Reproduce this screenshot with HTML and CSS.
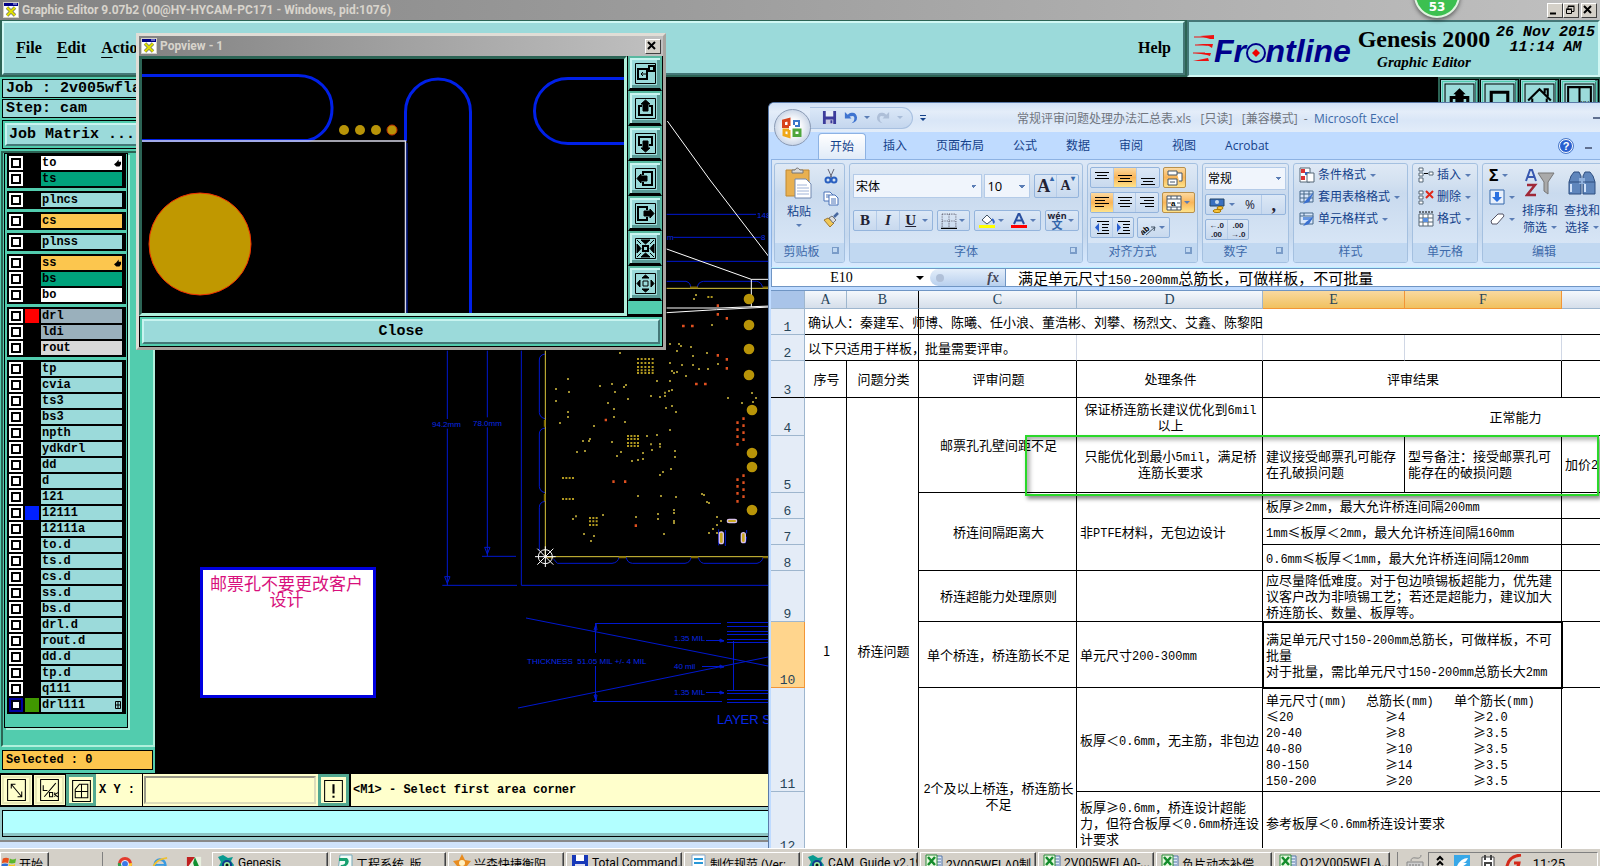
FILE: index.html
```html
<!DOCTYPE html>
<html lang="zh-CN">
<head>
<meta charset="utf-8">
<title>Genesis 2000</title>
<link rel="stylesheet" href="styles.css">
</head>
<body>
<svg class="defs" aria-hidden="true">
  <symbol id="xwin" viewBox="0 0 16 16"><path d="M0 0h16v16H0z" fill="#d4d0c8"/><path d="M1 1h14v14H1z" fill="#fff"/><path d="M1 1h14v3H1z" fill="#008"/><path d="M10 2h4" stroke="#ccf"/><path d="M4 5.500l8 8M12 5.500l-8 8" stroke="#776" stroke-width="3.500"/><path d="M4 5.500l8 8M12 5.500l-8 8" stroke="#e0e000" stroke-width="2"/></symbol>
  <symbol id="xls" viewBox="0 0 18 18"><path d="M8 2h9v14H8z" fill="#dfe8f6" stroke="#5577a8"/><path d="M12 5h4M12 8h4M12 11h4" stroke="#5577a8"/><path d="M1 1h11v12H1z" fill="#e8f8e0" stroke="#2c8b3a"/><path d="M3 3l7 8M10 3l-7 8" stroke="#148c2c" stroke-width="2.500"/></symbol>
  <symbol id="gen" viewBox="0 0 18 18"><path d="M1 3l5-2 5 3 5-1-2 4 3 4-3 6H6L2 12l2-4z" fill="#0a9a90"/><circle cx="10" cy="11" r="5" fill="#123a8c"/><circle cx="10" cy="11" r="3" fill="#9ff0a0"/><circle cx="10" cy="11" r="1.500" fill="#111"/></symbol>
</svg>
<div class="desktop">
<main class="workspace">
<section class="genesis">
  <header class="wtitle"><svg class="wi"><use href="#xwin"/></svg><span>Graphic Editor 9.07b2 (00@HY-HYCAM-PC171 - Windows, pid:1076)</span>
    <div class="wbtns"><button aria-label="Minimize"><svg viewBox="0 0 12 12"><path d="M2 9.500h6" stroke="#000" stroke-width="2"/></svg></button><button aria-label="Restore"><svg viewBox="0 0 12 12" fill="none" stroke="#000"><path d="M4 5V2.500h6v5H8M4 2h6.500M2.500 5.500h5v4h-5zM2 5h6"/></svg></button><button class="x" aria-label="Close window"><svg viewBox="0 0 12 12"><path d="M2 2l7 7M9 2l-7 7" stroke="#000" stroke-width="2"/></svg></button></div>
  </header>
  <div class="top">
    <nav class="menu"><button><u>F</u>ile</button><button><u>E</u>dit</button><button><u>A</u>ctions</button><button class="help">Help</button></nav>
    <div class="brand">
      <svg class="logo" viewBox="0 0 164 36"><g fill="#e11"><path d="M8 5l14-1v4h-4zM5 13h16l-1 4-3-2zM3 22h16l-1 3-3-1zM1 30h16l-1-3-5 1z"/><path d="M2 6h16M3 14h12M1 22h12" stroke="#e11"/></g><text x="22" y="31">Fr<tspan class="o">o</tspan>ntline</text><circle cx="64" cy="22" r="9" fill="#9bdada" stroke="#00008b" stroke-width="2"/><path d="M64 18l4 4-4 4-4-4z" fill="#f00000"/></svg>
      <div class="bname"><strong>Genesis 2000</strong><em>Graphic Editor</em></div>
      <div class="date">26 Nov 2015<br>11:14 AM</div>
    </div>
  </div>
  <div class="mid">
    <aside class="side">
      <div class="info">Job : 2v005wfla</div>
      <div class="info">Step: cam</div>
      <div class="mbox"><button class="mbtn">Job Matrix ...</button></div>
      <div class="well"><div class="list">
        <div class="grp"><label><input type="checkbox"><i></i><span class="w">to<svg class="hand" viewBox="0 0 9 9"><path d="M6 0v3h3v3L7 9H3L0 6l3-2z"/></svg></span></label><label><input type="checkbox"><i></i><span class="g">ts</span></label></div>
        <div class="grp"><label><input type="checkbox"><i></i><span>plncs</span></label></div>
        <div class="grp"><label><input type="checkbox"><i></i><span class="or">cs</span></label></div>
        <div class="grp"><label><input type="checkbox"><i></i><span>plnss</span></label></div>
        <div class="grp"><label><input type="checkbox"><i></i><span class="or">ss<svg class="hand" viewBox="0 0 9 9"><path d="M6 0v3h3v3L7 9H3L0 6l3-2z"/></svg></span></label><label><input type="checkbox"><i></i><span class="g">bs</span></label><label><input type="checkbox"><i></i><span class="w">bo</span></label></div>
        <div class="grp"><label><input type="checkbox"><i class="red"></i><span class="bl">drl</span></label><label><input type="checkbox"><i></i><span class="bl">ldi</span></label><label><input type="checkbox"><i></i><span class="gy">rout</span></label></div>
        <div class="grp"><label><input type="checkbox"><i></i><span>tp</span></label><label><input type="checkbox"><i></i><span>cvia</span></label><label><input type="checkbox"><i></i><span>ts3</span></label><label><input type="checkbox"><i></i><span>bs3</span></label><label><input type="checkbox"><i></i><span>npth</span></label><label><input type="checkbox"><i></i><span>ydkdrl</span></label><label><input type="checkbox"><i></i><span>dd</span></label><label><input type="checkbox"><i></i><span>d</span></label><label><input type="checkbox"><i></i><span>121</span></label><label><input type="checkbox"><i class="blue"></i><span>12111</span></label><label><input type="checkbox"><i></i><span>12111a</span></label><label><input type="checkbox"><i></i><span>to.d</span></label><label><input type="checkbox"><i></i><span>ts.d</span></label><label><input type="checkbox"><i></i><span>cs.d</span></label><label><input type="checkbox"><i></i><span>ss.d</span></label><label><input type="checkbox"><i></i><span>bs.d</span></label><label><input type="checkbox"><i></i><span>drl.d</span></label><label><input type="checkbox"><i></i><span>rout.d</span></label><label><input type="checkbox"><i></i><span>dd.d</span></label><label><input type="checkbox"><i></i><span>tp.d</span></label><label><input type="checkbox"><i></i><span>q111</span></label><label><input type="checkbox" class="on" checked><i class="green"></i><span>drl111<svg class="plus" viewBox="0 0 6 8"><path d="M.5.500h5v7h-5zM3 0v8M0 4h6" fill="none" stroke="#000"/></svg></span></label></div>
      </div></div>
      <div class="selected">Selected : 0</div>
    </aside>
    <div class="canvas">
      <svg class="board"><g transform="translate(-155 -77)">
        <svg class="pcb" x="400" y="180" width="380" height="420" viewBox="0 0 1140 1260" fill="none">
          <g stroke="#0018d0" stroke-width="3">
            <path d="M800 103h268M820 172h262M800 244h310M142 512v205M142 746v470M127 1216h224M262 512v200M262 742v387M246 1129h102M364 512v704h746"/>
            <path d="M134 1190h16l-8 20zM254 1102h16l-8 20z"/>
            <path d="M800 304h58q14 4 14 18M892 322q2-16 18-18h160q14 2 18 18M436 522q-18 2-18 18v158q2 16 18 18M436 744q-18 2-18 18v158q2 16 18 18M436 964q-18 2-18 18v130M460 1136l12 14h164q18-2 21-18M679 1132q2 16 18 18h158q16-2 18-18M895 1132q4 16 16 18h160q16-4 18-18"/>
            <path d="M956 1048v48M976 1050v48M1040 1050v10M1036 1090l4-20"/>
          </g>
          <g stroke="#dcc83c" stroke-width="3"><path d="M800 325h310M436 512v618h674"/></g>
          <path d="M434 720v20M434 942v22M656 1132h22M873 1132h22M870 322h24M1088 322h16M440 1132h20M1088 1132h20" stroke="#806800" stroke-width="5"/>
          <path d="M802-177L930 0l175 228M800 207l254 91h56M1054 298v82M800 384h160l150-6M800 398l150-9 160-8" stroke="#fff" stroke-width="3"/>
          <path d="M711 537h50M711 549h50M711 561h50M711 571h50M711 579h50" stroke="#b09820" stroke-width="6" stroke-dasharray="6 5"/>
          <path d="M681 768h36M681 777h36M681 789h36M681 798h36M567 1014h28M567 1024h28M567 1035h28M486 894h38M486 957h36M922 351h18" stroke="#b09820" stroke-width="6" stroke-dasharray="6 4"/>
          <path stroke="#a09030" stroke-width="6" d="M501 597h6M465 627h6M504 636h6M465 663h6M501 696h6M501 711h6M477 729h6M597 618h6M633 612h6M642 636h6M669 621h6M675 615h6M681 657h6M621 669h6M639 687h6M639 711h6M672 726h6M579 738h6M546 783h6M564 783h6M567 777h6M528 816h6M552 813h6M633 786h6M660 816h6M648 828h6M693 843h6M711 840h6M726 819h6M726 837h6M738 768h6M768 765h6M753 810h6M777 792h6M777 800h6M750 793h6M807 750h6M768 603h6M777 651h6M750 648h6M792 648h6M792 638h6M804 633h6M813 630h6M807 603h6M795 684h6M813 678h6M825 696h6M822 813h6M822 831h6M810 867h6M777 885h6M786 876h6M807 492h6M834 492h6M840 498h6M828 513h6M870 501h6M918 519h6M876 528h6M807 549h6M843 555h6M813 573h6M819 579h6M828 576h6M855 588h6M876 555h6M894 567h6M921 567h6M951 552h6M933 435h6M879 357h6M885 345h6M657 519h6M711 948h6M780 948h6M825 951h6M903 942h6M909 945h6M918 966h6M924 969h6M705 1011h6M771 1002h6M771 1017h6M819 990h6M819 999h6M819 1023h6M819 1029h6M516 1017h6M525 1009h6M606 1005h6M549 1062h6M579 1068h6M570 1083h6M789 1062h6M948 1011h6M960 1023h6M948 1035h6M936 1047h6M924 1059h6M948 1059h6M981 654h6M1023 669h6M1053 639h6M1065 654h6M1056 666h6"/>
          <path stroke="#e05020" stroke-width="8" d="M846 438h8M873 438h8M950 403h7M977 415h7M950 526h7M977 538h7M977 565h7M885 612h8M912 612h8M614 720h7M637 905h7M672 905h7M704 1037h7M1009 728h7M1009 749h7M1009 770h7M1009 793h7M1027 716h7M1027 737h7M1027 758h7M1027 779h7M1009 899h7M1009 919h7M1009 940h7M1009 964h7M1027 887h7M1027 908h7M1027 929h7M1027 950h7M950 377h7"/>
          <g fill="#b89408"><circle cx="1047" cy="357" r="16"/><circle cx="1047" cy="435" r="16"/><circle cx="1047" cy="507" r="16"/><circle cx="1047" cy="585" r="16"/><circle cx="1056" cy="690" r="16"/><circle cx="1056" cy="819" r="16"/><circle cx="1056" cy="861" r="16"/><circle cx="1056" cy="990" r="16"/></g>
          <g fill="#c8a820" stroke="#d8c0e8" stroke-width="4"><rect x="982" y="1018" width="28" height="10" rx="5"/><rect x="958" y="1056" width="12" height="35" rx="6"/><rect x="1024" y="1058" width="12" height="30" rx="6"/></g>
          <g stroke="#fff" stroke-width="3"><circle cx="436" cy="1130" r="21"/><path d="M405 1130h62M436 1099v62M412 1106l48 48M460 1106l-48 48"/></g>
        </svg>
        <g stroke="#0018d0" fill="none"><path d="M526 618l242 48M518 708l250-51M595 623.500h126M593 701.500h129M595.500 624v29M595.500 666v35M706 640.500h18M702 666.500h22M706 692.500h18M733.500 641v50M727 622.500h41M727 626.500h41M727 631.500h41M727 634.500h41M727 639.500h41M727 642.500h41M727 690.500h41M727 693.500h41M727 699.500h41M727 702.500h41"/><path d="M594 630h3l-1-6zM594 695h3l-1 6zM720 639v3l4-1zM720 665v3l4-1zM720 691v3l4-1z"/></g>
        <g class="dim"><text x="432" y="427">94.2mm</text><text x="473" y="426">78.0mm</text><text x="757" y="218">148</text><text x="761" y="240">8</text><text x="667" y="240">m</text><text x="674" y="641">1.35 MIL</text><text x="674" y="669">40 mil</text><text x="674" y="695">1.35 MIL</text><text x="527" y="664">THICKNESS  51.05 MIL +/- 4 MIL</text><text class="big" x="717" y="724">LAYER S</text></g>
      </g></svg>
      <div class="note">邮票孔不要更改客户设计</div>
      <div class="tools"><button aria-label="Pan up"><svg viewBox="0 0 30 30"><path d="M1 1h28v28H1z" fill="none" stroke="#000"/><path d="M7 28V14h16v14" fill="none" stroke="#000" stroke-width="3"/><path d="M11 20v-9H9l6-6 6 6h-2v9z"/></svg></button><button aria-label="Pan down"><svg viewBox="0 0 30 30"><path d="M1 1h28v28H1z" fill="none" stroke="#000"/><path d="M7 28V9h16v19" fill="none" stroke="#000" stroke-width="3"/><path d="M11 20h8v6h-8z"/></svg></button><button aria-label="Home"><svg viewBox="0 0 30 30" fill="none" stroke="#000" stroke-width="2"><path d="M1 1h28v28H1z" stroke-width="1"/><path d="M4 17L15 6l11 11M8 15v13M22 15v13M20 10V6h3v7M10 21h4v5h-4zM17 28v-8h4"/></svg></button><button aria-label="Coordinates"><svg viewBox="0 0 30 30"><path d="M1 1h28v28H1z" fill="none" stroke="#000"/><path d="M4 4h22v24H4zM15 4v24" fill="none" stroke="#000" stroke-width="2"/><text x="16" y="22">XY</text></svg></button></div>
    </div>
  </div>
  <div class="status">
    <button class="sb" aria-label="Snap corner"><svg viewBox="0 0 18 22" fill="none" stroke="#000"><path d="M.5.500h17v20H.5zM4 5l10 12M4 9V5h4M14 12v5h-4"/></svg></button><button class="sb" aria-label="Units"><svg viewBox="0 0 18 22" fill="none" stroke="#000"><path d="M.5.500h17v20H.5zM4 17L15 4M3 6v5h4M9 13h3v4H9zM14 13v4M17 13l-3 2 3 2"/></svg></button><button class="sb act" aria-label="Grid"><svg viewBox="0 0 18 22" fill="none" stroke="#000"><path d="M.5.500h17v20H.5zM3 17V9l4-5h8v13zM9 4v13M3 11h12"/></svg></button>
    <label class="xy" for="xy">X Y :</label><input id="xy" type="text"><button class="sb act ex" aria-label="Alert"><svg viewBox="0 0 18 22"><path d="M.5.500h17v20H.5z" fill="none" stroke="#000"/><path d="M9 4v9M9 15v2" stroke="#000" stroke-width="2"/></svg></button>
    <span class="msg">&lt;M1&gt; - Select first area corner</span>
  </div>
  <div class="foot"><div></div></div>
</section>
<div class="behind"></div>

<section class="pop">
  <header class="wtitle"><svg class="wi"><use href="#xwin"/></svg><span>Popview - 1</span><div class="wbtns"><button class="x" aria-label="Close popview"><svg viewBox="0 0 12 12"><path d="M2 2l7 7M9 2l-7 7" stroke="#000" stroke-width="2"/></svg></button></div></header>
  <div class="pbody">
    <div class="pview"><svg viewBox="142 59 482 256" preserveAspectRatio="xMinYMin slice"><g fill="none" stroke="#0020e8" stroke-width="3"><path d="M142 75.500h156a34 32 0 0 1 34 33q0 20-18 30l-6 2H142M624 78.500h-56a33 32 0 0 0 0 65h56M405.500 141v-29a32.500 33 0 0 1 65 0v204"/></g><path d="M142 141h263.500v175" fill="none" stroke="#d8d8e8" stroke-width="1.500"/><path d="M407 143v172" stroke="#0020c0"/><circle cx="200" cy="244" r="51" fill="#c09800" stroke="#f03000"/><g fill="#b89408"><circle cx="344" cy="130" r="5"/><circle cx="360" cy="130" r="5"/><circle cx="376" cy="130" r="5"/><circle cx="392" cy="130" r="5" stroke="#c03000"/></g></svg></div>
    <div class="ptools">
      <button aria-label="Zoom window"><svg viewBox="0 0 21 21"><path d="M.5.500h20v20H.5z"/><path d="M3 6h9v10H3zM14 3h5v5h-5z" stroke-width="2"/><path d="M12 11H6M8 9l-2 2 2 2M14 8l-3 3"/></svg></button>
      <button aria-label="Up"><svg viewBox="0 0 21 21"><path d="M.5.500h20v20H.5z"/><path d="M7 8H4v9h13V8h-3" stroke-width="2"/><path d="M8 13V6H6l4.500-4L15 6h-2v7z" fill="#000"/></svg></button>
      <button aria-label="Down"><svg viewBox="0 0 21 21"><path d="M.5.500h20v20H.5z"/><path d="M7 12H4V4h13v8h-3" stroke-width="2"/><path d="M8 8v7H6l4.500 4 4.500-4h-2V8z" fill="#000"/></svg></button>
      <button aria-label="Left"><svg viewBox="0 0 21 21"><path d="M.5.500h20v20H.5z"/><path d="M8 7V4h9v13H8v-3" stroke-width="2"/><path d="M12 8H6V6l-4 4.500L6 15v-2h6z" fill="#000"/></svg></button>
      <button aria-label="Right"><svg viewBox="0 0 21 21"><path d="M.5.500h20v20H.5z"/><path d="M12 7V4H3v13h9v-3" stroke-width="2"/><path d="M9 8h6V6l4 4.500-4 4.500v-2H9z" fill="#000"/></svg></button>
      <button aria-label="Zoom in"><svg viewBox="0 0 21 21"><path d="M.5.500h20v20H.5z"/><path d="M8 8h5v5H8z" stroke-width="2"/><path d="M6 2h9l-4.500 4zM6 19h9l-4.500-4zM2 6v9l4-4.500zM19 6v9l-4-4.500zM2 2l4 4M19 2l-4 4M2 19l4-4M19 19l-4-4" fill="#000"/></svg></button>
      <button aria-label="Zoom out"><svg viewBox="0 0 21 21"><path d="M.5.500h20v20H.5z"/><path d="M8 8h5v5H8z"/><path d="M7 5h7l-3.500-3zM7 16h7l-3.500 3zM5 7v7l-3-3.500zM16 7v7l3-3.500z" fill="#000"/></svg></button>
    </div>
  </div>
  <div class="pclose"><button>Close</button></div>
</section>

<section class="excel">
  <header class="xtitle">
    <button class="orb" aria-label="Office"><svg viewBox="0 0 24 24" fill="none" stroke-width="3"><path d="M9 10V3.500L3.500 5v5.500H9" stroke="#d8431c"/><path d="M14 9V5h5v5h-4" stroke="#3a76c8" stroke-width="2"/><path d="M9 14H4v5l5 1.500V14" stroke="#f0a818"/><path d="M14 14h6v5.500h-6z" stroke="#4fa63c"/></svg></button>
    <div class="qat"><button aria-label="Save"><svg viewBox="0 0 16 16"><path d="M1 1h14v14H1z" fill="#3c3c9c"/><path d="M4 1h8v6H4z" fill="#e8eef8"/><path d="M4 10h8v5H4z" fill="#c8c8e0"/><path d="M9 11h2v3H9z" fill="#3c3c9c"/></svg></button><button aria-label="Undo"><svg viewBox="0 0 16 16"><path d="M2 2v7h7L7 7q6-2 5 3 0 2-3 4 6-1 6-6-1-6-6-5-2 0-4 2z" fill="#3f74d0"/></svg></button><i class="dd"></i><button aria-label="Redo"><svg viewBox="0 0 16 16"><path d="M14 2v7H7l2-2q-6-2-5 3 0 2 3 4-6-1-6-6 1-6 6-5 2 0 4 2z" fill="#aebfd8"/></svg></button><i class="dd pale"></i></div>
    <button class="qmore" aria-label="Customize"><b></b><i class="dd"></i></button>
    <h1>常规评审问题处理办法汇总表.xls&nbsp;&nbsp; [只读]&nbsp;&nbsp; [兼容模式]&nbsp; -&nbsp; <span>Microsoft Excel</span></h1>
    <b class="minus"></b>
  </header>
  <nav class="tabs"><a href="#" class="cur">开始</a><a href="#">插入</a><a href="#">页面布局</a><a href="#">公式</a><a href="#">数据</a><a href="#">审阅</a><a href="#">视图</a><a href="#">Acrobat</a><button class="q" aria-label="Help">?</button><b class="minus"></b></nav>
  <div class="ribbon">
    <section class="rg clip"><div class="rb">
      <button class="big"><svg viewBox="0 0 28 32"><path d="M1 3h23v26H1z" fill="#e8b050" stroke="#c08830"/><path d="M7 6V3h3q2-4 5 0h3v3z" fill="#d8d8d8" stroke="#777"/><path d="M10 12h11l5 5v14H10z" fill="#fff" stroke="#7088b0"/><path d="M12 18h10M12 21h12M12 24h12M12 27h12" stroke="#a0b4d8"/></svg>粘贴<i class="dd"></i></button>
      <div class="col"><button aria-label="Cut"><svg viewBox="0 0 16 16" fill="none"><path d="M5 1l4 9M11 1L7 10" stroke="#667"/><circle cx="5" cy="12" r="2.500" stroke="#2a60c0" stroke-width="2"/><circle cx="11" cy="12" r="2.500" stroke="#2a60c0" stroke-width="2"/></svg></button><button aria-label="Copy"><svg viewBox="0 0 16 16" fill="#fff" stroke="#4a72b8"><path d="M1 2h6l3 3v6H1z"/><path d="M6 5h6l3 3v7H6z"/><path d="M8 9h5M8 11h5M8 13h5M3 5h3M3 7h3"/></svg></button><button aria-label="Format painter"><svg viewBox="0 0 16 16"><path d="M1 8l4-2 6 5-4 4z" fill="#f0c858" stroke="#a07830"/><path d="M6 6l3-2 4 4-3 3z" fill="#ddd" stroke="#777"/><path d="M11 5l4-4" stroke="#4868a0" stroke-width="2.500"/></svg></button></div>
    </div><footer>剪贴板<b class="lau"></b></footer></section>
    <section class="rg font"><div class="rb rows">
      <div class="row tall"><select aria-label="Font" class="fname"><option>宋体</option></select><select aria-label="Font size" class="fsize"><option>10</option></select><div class="seg ser"><button class="ab">A<sup>▴</sup></button><button class="am">A<sup>▾</sup></button></div></div>
      <div class="row"><div class="seg ser biu"><button>B</button><button class="it">I</button><button class="un">U</button><i class="dd"></i></div><div class="seg w34"><button aria-label="Borders"><svg viewBox="0 0 14 14"><path d="M1 1h12M1 7h12M1 1v12M7 1v12M13 1v12" stroke="#667" stroke-dasharray="1 1"/><path d="M0 13.500h14" stroke="#000"/></svg></button><i class="dd"></i></div><div class="seg w67"><button aria-label="Fill color"><svg viewBox="0 0 16 16"><path d="M3 7l5-5 5 5-5 4z" fill="#fff" stroke="#456"/><path d="M13 6q3 3 1 4" stroke="#36c" fill="none" stroke-width="2"/><path d="M0 12h16v3H0z" fill="#ff0"/></svg></button><i class="dd"></i><button aria-label="Font color"><svg viewBox="0 0 16 16"><path d="M3 11L7.500 1h1L13 11M5 7.500h6" fill="none" stroke="#2a50a0" stroke-width="2"/><path d="M0 12h16v3H0z" fill="#f00"/></svg></button><i class="dd"></i></div><div class="seg w34"><button class="wen"><span>wén</span><span class="zi">文</span></button><i class="dd"></i></div></div>
    </div><footer>字体<b class="lau"></b></footer></section>
    <section class="rg algn"><div class="rb rows3">
      <div class="row"><div class="seg s3"><button aria-label="Top"><svg viewBox="0 0 16 16"><path d="M1 2.500h14M3 5.500h10M1 8.500h14" stroke="#000"/></svg></button><button class="hot" aria-label="Middle"><svg viewBox="0 0 16 16"><path d="M1 5.500h14M3 8.500h10M1 11.500h14" stroke="#000"/></svg></button><button aria-label="Bottom"><svg viewBox="0 0 16 16"><path d="M1 8.500h14M3 11.500h10M1 14.500h14" stroke="#000"/></svg></button></div><div class="seg hot"><button aria-label="Wrap"><svg viewBox="0 0 16 16" fill="#fff" stroke="#456"><path d="M1 1h9v4H1zM1 9h9v6H1zM10 3h5v8h-3M3 12h5"/></svg></button></div></div>
      <div class="row"><div class="seg s3"><button class="hot" aria-label="Align left"><svg viewBox="0 0 16 16"><path d="M1 2.500h14M1 5.500h10M1 8.500h14M1 11.500h9" stroke="#000"/></svg></button><button aria-label="Center"><svg viewBox="0 0 16 16"><path d="M1 2.500h14M3 5.500h10M1 8.500h14M3 11.500h10" stroke="#000"/></svg></button><button aria-label="Align right"><svg viewBox="0 0 16 16"><path d="M1 2.500h14M5 5.500h10M1 8.500h14M6 11.500h9" stroke="#000"/></svg></button></div><div class="seg hot"><button aria-label="Merge"><svg viewBox="0 0 16 16" fill="#fff" stroke="#456"><path d="M1 1h14v14H1zM1 4h14M1 12h14M5 1v3M11 1v3M5 12v3M11 12v3M2 8h3M11 8h3"/><text x="5" y="11">a</text></svg></button><i class="dd"></i></div></div>
      <div class="row"><div class="seg"><button aria-label="Outdent"><svg viewBox="0 0 16 16"><path d="M3 1.500h12M8 4.500h7M8 7.500h6M8 10.500h7M3 13.500h12" stroke="#000"/><path d="M5 3v9L1 7.500z" fill="#2a60d0"/></svg></button><button aria-label="Indent"><svg viewBox="0 0 16 16"><path d="M3 1.500h12M8 4.500h7M8 7.500h6M8 10.500h7M3 13.500h12" stroke="#000"/><path d="M2 3v9l4-4.500z" fill="#2a60d0"/></svg></button></div><div class="seg"><button aria-label="Orientation"><svg viewBox="0 0 16 16"><text x="-2" y="11" transform="rotate(-40 6 8)">ab</text><path d="M5 15l9-8M14 7l-1 4M14 7l-4 0" stroke="#456"/></svg></button><i class="dd"></i></div></div>
    </div><footer>对齐方式<b class="lau"></b></footer></section>
    <section class="rg num"><div class="rb rows3"><select aria-label="Format" class="nf"><option>常规</option></select>
      <div class="row"><div class="seg full"><button aria-label="Currency"><svg viewBox="0 0 16 16"><path d="M1 2h14v7H1z" fill="#3a70c0" stroke="#246"/><circle cx="8" cy="5" r="2" fill="#cde"/><ellipse cx="11" cy="11" rx="3" ry="1.500" fill="#fc4" stroke="#a70"/><ellipse cx="8" cy="14" rx="4" ry="1.500" fill="#fc4" stroke="#a70"/></svg></button><i class="dd"></i><button>%</button><button class="comma">,</button></div></div>
      <div class="row"><div class="seg dec"><button>←.0<br>.00</button><button>.00<br>→.0</button></div></div>
    </div><footer>数字<b class="lau"></b></footer></section>
    <section class="rg sty"><div class="rb links">
      <button><svg viewBox="0 0 16 16"><path d="M1 1h10v14H1z" fill="#fff" stroke="#567"/><path d="M2 2h4v4H2zM2 9h4v4H2z" fill="#d33"/><path d="M6 5h4v3H6z" fill="#36c"/><path d="M8 6h7v9H8z" fill="#fff" stroke="#567"/></svg>条件格式<i class="dd"></i></button>
      <button><svg viewBox="0 0 16 16"><path d="M1 2h13v11H1zM1 5h13M1 9h13M5 2v11M10 2v11" fill="#d8e6fa" stroke="#468"/><path d="M4 15l3-4 8-8-5 10z" fill="#3a70d0"/></svg>套用表格格式<i class="dd"></i></button>
      <button><svg viewBox="0 0 16 16"><path d="M1 2h13v11H1zM1 5h13M5 2v3" fill="#d8e6fa" stroke="#468"/><path d="M4 6h9v3H4z" fill="#6a98e0"/><path d="M4 15l3-4 8-6-5 8z" fill="#3a70d0"/></svg>单元格样式<i class="dd"></i></button>
    </div><footer>样式</footer></section>
    <section class="rg cel"><div class="rb links">
      <button><svg viewBox="0 0 16 16" fill="#fff" stroke="#567"><path d="M1 1h4v3H1zM1 6h4v3H1zM1 11h4v4H1zM11 5h4v3h-4z"/><path d="M10 6.500H6" stroke="#000"/></svg>插入<i class="dd"></i></button>
      <button><svg viewBox="0 0 16 16" fill="#fff" stroke="#567"><path d="M1 2h4v3H1zM1 7h4v3H1zM1 12h4v3H1z"/><path d="M8 2l7 7M15 2l-7 7" stroke="#e02818" stroke-width="2"/></svg>删除<i class="dd"></i></button>
      <button><svg viewBox="0 0 16 16"><path d="M1 3h14v12H1zM1 7h14M1 11h14M5 3v12M10 3v12" fill="#fff" stroke="#567"/><path d="M5 7h5v4H5z" fill="#5a90e0"/><path d="M1 1h14" stroke="#000" stroke-dasharray="2 1"/></svg>格式<i class="dd"></i></button>
    </div><footer>单元格</footer></section>
    <section class="rg edt"><div class="rb">
      <div class="links sm"><button class="sig">Σ<i class="dd"></i></button><button aria-label="Fill"><svg viewBox="0 0 16 16"><path d="M1 1h14v14H1z" fill="#e8f0fc" stroke="#36a"/><path d="M6 3h4v5h3l-5 5-5-5h3z" fill="#2a70e0"/></svg><i class="dd"></i></button><button aria-label="Clear"><svg viewBox="0 0 16 16"><path d="M2 10l7-7h5l1 2-7 8H3z" fill="#fff" stroke="#556"/></svg><i class="dd"></i></button></div>
      <button class="big"><svg viewBox="0 0 30 30"><path d="M13 5h16l-6 9v12l-4-3v-9z" fill="#aaa" stroke="#777"/><path d="M1 13L5 2h2l4 11M3 9h6" stroke="#3858b0" stroke-width="2" fill="none"/><path d="M2 17h8L2 27h9" stroke="#a02838" stroke-width="2.500" fill="none"/></svg>排序和<span>筛选<i class="dd"></i></span></button>
      <button class="big"><svg viewBox="0 0 30 30"><path d="M4 8l3-4h5l2 4v18H2V14zM26 8l-3-4h-5l-2 4v18h12V14z" fill="#5f86bc" stroke="#2f4f80"/><path d="M12 10h6v6h-6z" fill="#8fb0dc"/><path d="M4 16v8M18 16v8" stroke="#d0e2fa" stroke-width="2"/><path d="M2 14h12M16 14h12" stroke="#2f4f80"/></svg>查找和<span>选择<i class="dd"></i></span></button>
    </div><footer>编辑</footer></section>
  </div>
  <div class="fbar"><label class="nb"><input aria-label="Name box" value="E10"><i class="dd blk"></i></label><div class="fx"><b></b><em>fx</em></div><div class="ft">满足单元尺寸<s>150-200mm</s>总筋长，可做样板，不可批量</div></div>
  <div class="sheet">
  <table>
    <colgroup><col class="c0"><col class="cA"><col class="cB"><col class="cC"><col class="cD"><col class="cE"><col class="cF"><col class="cG"></colgroup>
    <thead><tr><th class="cor"></th><th>A</th><th class="k">B</th><th>C</th><th>D</th><th class="s">E</th><th class="s">F</th><th></th></tr></thead>
    <tbody>
    <tr class="h26"><th>1</th><td colspan="2" class="l nw">确认人：秦建军、师博、陈曦、任小浪、董浩彬、刘攀、杨烈文、艾鑫、陈黎阳</td><td colspan="5" class="nr"></td></tr>
    <tr class="h26"><th>2</th><td colspan="2" class="l nw">以下只适用于样板，批量需要评审。</td><td class="lt"></td><td class="lt"></td><td class="lt"></td><td class="lt"></td><td></td></tr>
    <tr class="h37"><th class="k">3</th><td>序号</td><td>问题分类</td><td>评审问题</td><td>处理条件</td><td colspan="2">评审结果</td><td></td></tr>
    <tr class="h38"><th>4</th><td rowspan="10">1</td><td rowspan="10">桥连问题</td><td rowspan="2">邮票孔孔壁间距不足</td><td>保证桥连筋长建议优化到<s>6mil</s>以上</td><td colspan="3">正常能力</td></tr>
    <tr class="h57"><th>5</th><td>只能优化到最小<s>5mil</s>，满足桥连筋长要求</td><td class="l">建议接受邮票孔可能存在孔破损问题</td><td class="l">型号备注：接受邮票孔可能存在的破损问题</td><td class="l">加价<s>2</s></td></tr>
    <tr class="h26"><th>6</th><td rowspan="3">桥连间隔距离大</td><td rowspan="3" class="l">非<s>PTFE</s>材料，无包边设计</td><td colspan="2" class="l">板厚≥<s>2mm</s>，最大允许桥连间隔<s>200mm</s></td><td></td></tr>
    <tr class="h26"><th>7</th><td colspan="2" class="l"><s>1mm</s>≤板厚＜<s>2mm</s>，最大允许桥连间隔<s>160mm</s></td><td></td></tr>
    <tr class="h26"><th>8</th><td colspan="2" class="l"><s>0.6mm</s>≤板厚＜<s>1mm</s>，最大允许桥连间隔<s>120mm</s></td><td></td></tr>
    <tr class="h51"><th>9</th><td>桥连超能力处理原则</td><td></td><td colspan="2" class="l">应尽量降低难度。对于包边喷锡板超能力，优先建议客户改为非喷锡工艺；若还是超能力，建议加大桥连筋长、数量、板厚等。</td><td></td></tr>
    <tr class="h66"><th class="s">10</th><td>单个桥连，桥连筋长不足</td><td class="l">单元尺寸<s>200-300mm</s></td><td colspan="2" class="l selc">满足单元尺寸<s>150-200mm</s>总筋长，可做样板，不可批量<br>对于批量，需比单元尺寸<s>150-200mm</s>总筋长大<s>2mm</s></td><td></td></tr>
    <tr class="h104"><th>11</th><td rowspan="3"><s>2</s>个及以上桥连，桥连筋长不足</td><td class="l">板厚＜<s>0.6mm</s>，无主筋，非包边</td><td colspan="2" class="l"><div class="g3"><span>单元尺寸<s>(mm)</s></span><span>总筋长<s>(mm)</s></span><span>单个筋长<s>(mm)</s></span><span>≤<s>20</s></span><span class="v">≥<s>4</s></span><span class="v">≥<s>2.0</s></span><span><s>20-40</s></span><span class="v">≥<s>8</s></span><span class="v">≥<s>3.5</s></span><span><s>40-80</s></span><span class="v">≥<s>10</s></span><span class="v">≥<s>3.5</s></span><span><s>80-150</s></span><span class="v">≥<s>14</s></span><span class="v">≥<s>3.5</s></span><span><s>150-200</s></span><span class="v">≥<s>20</s></span><span class="v">≥<s>3.5</s></span></div></td><td></td></tr>
    <tr class="h62"><th>12</th><td class="l">板厚≥<s>0.6mm</s>，桥连设计超能力，但符合板厚＜<s>0.6mm</s>桥连设计要求</td><td colspan="2" class="l">参考板厚＜<s>0.6mm</s>桥连设计要求</td><td></td></tr>
    <tr class="h51"><th></th><td></td><td colspan="2"></td><td></td></tr>
    </tbody>
  </table>
  </div>
</section>
<div class="mark"></div>
<div class="badge">53</div>
</main>
<footer class="taskbar">
  <button class="start"><svg viewBox="0 0 18 18"><path d="M2 4q4-2 7 0L8 9Q5 8 1 9z" fill="#e8501c"/><path d="M10 4q3 2 7 0l-1 5q-4 1-7 0z" fill="#5ab82c"/><path d="M1 10q4-1 7 0l-1 5q-4-1-7 0z" fill="#2c6cd8"/><path d="M9 10q3 2 7 0l-1 5q-4 1-7 0z" fill="#f8c81c"/></svg>开始</button>
  <div class="ql"><svg viewBox="0 0 18 18"><circle cx="9" cy="9" r="8" fill="#e33b2e"/><path d="M9 9L1 8q0 8 7 9z" fill="#2ba24c"/><path d="M9 9l8-1q0 8-9 9z" fill="#fc3"/><circle cx="9" cy="9" r="4" fill="#3b78e7" stroke="#fff"/></svg><svg viewBox="0 0 18 18"><circle cx="9" cy="10" r="6" fill="none" stroke="#3a9ae0" stroke-width="3"/><path d="M4 10h11" stroke="#3a9ae0" stroke-width="2"/><path d="M1 15Q2 4 17 2" fill="none" stroke="#f0c030" stroke-width="2"/></svg><svg viewBox="0 0 18 18"><path d="M1 1h16v16H1z" fill="#e8f0e0"/><path d="M1 1h9L1 14z" fill="#c02020"/><path d="M10 1l7 16h-6L8 8z" fill="#109030"/></svg></div>
  <button class="tb"><svg><use href="#gen"/></svg>Genesis</button>
  <button class="tb"><svg viewBox="0 0 18 18"><path d="M5 1h12v16H3z" fill="#f4fcf8" stroke="#7ab"/><path d="M4 4h8q4 4-1 8l-7 3 2-4q5 0 4-4H4z" fill="#18a070"/></svg>工程系统_版...</button>
  <button class="tb"><svg viewBox="0 0 18 18"><path d="M9 0l3 6 6 1-4 5 1 6-6-3-6 3 1-6-4-5 6-1z" fill="#e88c20"/><circle cx="9" cy="9" r="3" fill="#fff0c0"/></svg>兴森快捷衡阳...</button>
  <button class="tb"><svg viewBox="0 0 18 18"><path d="M1 1h16v16H1z" fill="#1838b8"/><path d="M5 1h8v6H5z" fill="#fff"/><path d="M4 10h10v7H4z" fill="#dde"/></svg>Total Command...</button>
  <button class="tb"><svg viewBox="0 0 18 18"><path d="M3 1h13v16H3z" fill="#fff" stroke="#8ac"/><path d="M5 5h9M5 9h9M5 13h9" stroke="#2898d8" stroke-width="2"/></svg>制作规范 (Ver:...</button>
  <button class="tb"><svg><use href="#gen"/></svg>CAM_Guide v2.19</button>
  <button class="tb"><svg><use href="#xls"/></svg>2V005WFLA0制...</button>
  <button class="tb"><svg><use href="#xls"/></svg>2V005WFLA0-...</button>
  <button class="tb"><svg><use href="#xls"/></svg>负片动态补偿...</button>
  <button class="tb"><svg><use href="#xls"/></svg>Q12V005WFLA...</button>
  <div class="kb"><svg viewBox="0 0 18 18"><path d="M1 8h16v8H1z" fill="#ccc" stroke="#888"/><path d="M3 11h12M3 13h12" stroke="#777" stroke-dasharray="2 1"/><path d="M5 7q0-4 5-3t5-3" fill="none" stroke="#888"/></svg></div>
  <div class="tray"><svg viewBox="0 0 10 18" class="chev"><path d="M2 6l3-3 3 3M2 11l3-3 3 3" fill="none" stroke="#000" stroke-width="2"/></svg><svg viewBox="0 0 18 18"><path d="M1 1h16v16H1z" fill="#38a8e8"/><path d="M4 12q4-8 11-8-2 5-6 5h5q-4 5-10 3z" fill="#fff"/></svg><svg viewBox="0 0 18 18"><path d="M3 3h12v13H3z" fill="#fff" stroke="#444"/><path d="M6 1v5M12 1v5M6 9h6v4H6z" fill="none" stroke="#444" stroke-width="2"/></svg><svg viewBox="0 0 18 18"><path d="M16 1Q4 2 2 12q0 5 6 4 5-1 6-7H9" fill="none" stroke="#d42a1a" stroke-width="3"/></svg><time>11:25</time></div>
</footer>
</div>
</body>
</html>
```

FILE: styles.css
```css
* { box-sizing: border-box; }
body { margin: 0; font-family: "Open Sans", "Noto Sans CJK SC", sans-serif; font-size: 12px; overflow: hidden; }
button, input, select { font: inherit; color: inherit; margin: 0; padding: 0; border: 0; background: none; border-radius: 0; }
svg { display: block; flex: none; }
.defs { position: absolute; width: 0; height: 0; }
.desktop { height: 100vh; display: flex; flex-direction: column; background: #d4d0c8; }
.workspace { flex: 1; position: relative; overflow: hidden; display: flex; flex-direction: column; min-height: 0; }
.genesis { flex: 1; display: flex; flex-direction: column; min-height: 0; background: #9bdada; font-family: "Liberation Mono", monospace; }

.wtitle { display: flex; align-items: center; gap: 3px; height: 20px; padding: 0 3px; flex: none; background: linear-gradient(90deg, #828282, #c0c0c0); color: #d8d4cc; white-space: nowrap; }
.wtitle span { font: bold 12px/18px Roboto, sans-serif; }
.wi { width: 16px; height: 16px; }
.wbtns { margin-left: auto; display: flex; }
.wbtns button { width: 16px; height: 15px; background: #d4d0c8; border: 1px solid; border-color: #fff #404040 #404040 #fff; }
.genesis .wbtns .x { margin-left: 2px; }
.wbtns svg { width: 12px; height: 12px; }

.top { display: flex; height: 57px; flex: none; background: #2c6455; gap: 2px; }
.menu { flex: 1; display: flex; gap: 15px; align-items: center; margin: 1px 0 2px 2px; padding: 0 12px; background: #9bdada; border: 2px solid; border-color: #d0f8f4 #477 #477 #d0f8f4; font: bold 16px "Liberation Serif", serif; }
.menu u { text-underline-offset: 4px; }
.help { margin-left: auto; }
.brand { display: flex; align-items: center; width: 413px; padding: 0 3px; background: #9bdada; border: 2px solid; border-color: #477 #d0f8f4 #d0f8f4 #477; }
.logo { width: 164px; height: 36px; }
.logo text { font: italic bold 32px "Liberation Sans", sans-serif; fill: #00008b; }
.logo .o { fill: none; }
.bname { width: 136px; font-family: "Liberation Serif", serif; text-align: center; }
.bname strong { display: block; font-size: 24px; line-height: 28px; white-space: nowrap; }
.bname em { font-weight: bold; font-size: 15px; line-height: 19px; }
.date { font-style: italic; font-weight: bold; font-size: 15px; line-height: 15px; text-align: center; align-self: flex-start; padding-top: 3px; margin-left: 4px; white-space: nowrap; }

.mid { flex: 1; display: flex; min-height: 0; }
.side { width: 155px; flex: none; display: flex; flex-direction: column; background: #52ccae; padding: 2px 2px 3px; }
.info { height: 19px; margin-bottom: 1px; flex: none; padding-left: 3px; overflow: hidden; white-space: nowrap; border: 1px solid #000; background: #9bdada; font: bold 15px/17px "Liberation Mono", monospace; }
.mbox { border: 1px solid #000; padding: 2px; margin: 1px 0 2px; flex: none; }
.mbtn { display: block; width: 100%; height: 23px; text-align: left; padding-left: 2px; background: #9bdada; border: 2px solid; border-color: #c8f4f0 #477 #477 #c8f4f0; font: bold 15px "Liberation Mono", monospace; }
.well { flex: 1; min-height: 0; border-left: 2px solid #2c6455; border-top: 2px solid #2c6455; border-right: 2px solid #b0f0dc; border-bottom: 2px solid #b0f0dc; margin: 0 -2px 3px -1px; }
.list { width: 124px; height: 575px; padding: 1px 3px 3px; display: flex; flex-direction: column; gap: 5px; border: 1px solid #000; margin: 0 1px; box-shadow: 2px 2px #b0f0dc; }
.grp { background: #000; outline: 1px solid #000; width: 117px; }
.grp label { display: flex; height: 16px; align-items: center; gap: 2px; padding-left: 1px; }
.grp input { appearance: none; width: 14px; height: 14px; background: #fff; position: relative; flex: none; }
.grp input::after { content: ""; position: absolute; inset: 2px; border: 2px solid #000; }
.grp input.on { background: #0000a0; }
.grp input.on::after { background: #fff; border-color: #001; }
.grp i { width: 14px; height: 14px; flex: none; }
.red { background: #f00; } .blue { background: #0020ff; } .green { background: #409800; }
.grp span { width: 81px; height: 14px; background: #9bdada; padding: 0 1px; font-weight: bold; font-size: 12px; line-height: 13px; display: flex; align-items: center; justify-content: space-between; }
.grp .w { background: #fff; } .grp .g { background: #00a27c; } .grp .or { background: #fcc64e; } .grp .bl { background: #9ab0bc; } .grp .gy { background: #d8d8d8; }
.hand { width: 7px; height: 8px; } .plus { width: 6px; height: 8px; }
.selected { height: 20px; flex: none; padding-left: 3px; border: 1px solid #000; background: #fcc64e; font-weight: bold; line-height: 18px; }

.canvas { flex: 1; position: relative; background: #000; overflow: hidden; }
.board { position: absolute; width: 100%; height: 100%; }
.pcb { overflow: visible; }
.dim text { font: 8px "Liberation Sans", sans-serif; fill: #0828e8; white-space: pre; }
.dim .big { font-size: 13px; }
.note { position: absolute; left: 45px; top: 490px; width: 176px; height: 131px; border: 3px solid #0000e0; background: #fff; color: #d8107c; font: 17px/16px "Noto Sans CJK SC", sans-serif; text-align: center; padding: 5px 10px 5px 7px; }
.tools { position: absolute; right: 0; top: 0; display: flex; background: #2c6455; padding: 2px 1px 0 2px; gap: 1px; }
.tools button { width: 39px; height: 39px; background: #9bdada; border: 1px solid #000; outline: 1px solid #52ccae; outline-offset: -3px; box-shadow: inset -3px 0 #477; padding: 3px; }
.tools svg { width: 31px; height: 31px; }
.tools text { font: 7px "Liberation Mono", monospace; }

.status { display: flex; height: 34px; flex: none; background: #ffc; border-top: 1px solid #000; border-bottom: 1px solid #000; font-weight: bold; }
.sb { width: 33px; padding: 4px 6px; border: 1px solid #000; outline: 2px solid #e8e8b8; outline-offset: -4px; }
.sb svg { width: 19px; height: 23px; }
.sb.act { width: 30px; border: 3px solid #52a890; padding: 3px; outline: 0; }
.xy { width: 47px; padding-left: 3px; line-height: 32px; white-space: nowrap; border-right: 1px solid #000; }
.status input { width: 172px; height: 28px; margin: 2px 2px 2px 1px; border: 2px solid; border-color: #998 #ddb #ddb #998; }
.sb.ex { width: 31px; padding: 3px; }
.msg { line-height: 32px; padding-left: 2px; border-left: 2px solid #000; white-space: nowrap; }
.foot { height: 35px; flex: none; background: #9cc; padding: 3px 2px; border-bottom: 2px solid #888; }
.foot div { height: 27px; background: #b2ffff; border: 1px solid #000; box-shadow: inset 0 -3px #8cc4c4; }
.behind { height: 6px; background: #cfe2fa; flex: none; }

.pop { position: absolute; left: 136px; top: 33px; width: 530px; height: 317px; background: #52ccae; border: 3px solid; border-color: #e0ddd6 #a8a5a0 #a8a5a0 #e0ddd6; display: flex; flex-direction: column; }
.pop .wtitle { padding: 0 2px; }
.pbody { flex: 1; display: flex; min-height: 0; }
.pview { flex: 1; background: #000; border: 3px solid; border-color: #2c6455 #b0f0dc #b0f0dc #2c6455; min-width: 0; }
.pview svg { width: 100%; height: 100%; }
.ptools { width: 36px; border-left: 1px solid #000; border-right: 1px solid #000; border-bottom: 2px solid #000; }
.ptools button { display: flex; align-items: center; justify-content: center; width: 34px; height: 35px; background: #9bdada; border: 2px solid #58b8a0; border-bottom: 3px solid #000; box-shadow: inset 2px 2px #c8f4f0, inset -3px -3px #5a9a96; }
.ptools svg { width: 21px; height: 21px; fill: none; stroke: #000; }
.pclose { height: 31px; flex: none; border: 1px solid #000; padding: 2px; }
.pclose button { width: 100%; height: 100%; background: #9bdada; border: 2px solid; border-color: #c8f4f0 #477 #477 #c8f4f0; font: bold 15px "Liberation Mono", monospace; }

.excel { position: absolute; left: 768px; right: 0; top: 102px; bottom: 0; background: #bfdbff; border-left: 1px solid #5a7aa8; border-top: 1px solid #5a7aa8; border-radius: 6px 0 0 0; display: flex; flex-direction: column; padding-left: 2px; color: #15428b; overflow: hidden; }
.dd { display: inline-block; width: 0; height: 0; border: 3px solid transparent; border-top: 3px solid #5a7db5; border-bottom: 0; flex: none; }
.dd.pale { border-top-color: #a8bcd8; } .dd.blk { border-width: 4px; border-bottom: 0; border-top-color: #000; }
.xtitle { height: 29px; flex: none; display: flex; align-items: center; background: linear-gradient(#d0e0f6, #e4edf9 30%, #d9e6f7 60%, #e2ecf9); margin-left: -2px; position: relative; }
.orb { width: 37px; height: 37px; border-radius: 50%; background: radial-gradient(#fff 30%, #c8d4e6 75%, #f4f8fc); border: 1px solid #8a9ab4; position: absolute; left: 5px; top: 6px; z-index: 2; padding: 5px; }
.orb svg { width: 24px; height: 24px; }
.qat { margin-left: 41px; width: 103px; height: 22px; display: flex; align-items: center; padding-left: 12px; gap: 6px; border: 1px solid #a8c0e0; border-left: 0; border-radius: 0 11px 11px 0; background: linear-gradient(#dbe8f8, #c4d6ee); }
.qat svg { width: 15px; height: 15px; }
.qmore { width: 20px; display: grid; justify-items: center; gap: 2px; }
.qmore b { width: 6px; height: 1px; background: #15428b; } .qmore .dd { border-top-color: #15428b; }
h1 { flex: 1; margin: 0; padding-left: 84px; font-size: 12px; font-weight: 400; color: #70757e; white-space: nowrap; }
h1 span { color: #3d6aa8; }
.minus { width: 7px; height: 2px; background: #607090; }
.tabs { height: 27px; flex: none; display: flex; align-items: flex-end; padding-left: 47px; }
.tabs a { color: inherit; text-decoration: none; height: 26px; line-height: 25px; padding: 0 14px; margin-right: 1px; }
.tabs .cur { background: linear-gradient(#fff, #e0ebf8); border: 1px solid #8db2e3; border-bottom: 0; border-radius: 4px 4px 0 0; padding: 0 11px; margin-right: 3px; }
.q { width: 14px; height: 14px; border-radius: 50%; background: #2a60d0; border: 1px solid #fff; outline: 1px solid #4a78c8; color: #fff; font: bold 11px/12px "Liberation Sans", sans-serif; margin: 0 12px 6px auto; }
.tabs .minus { margin: 0 8px 10px 0; }
.ribbon { height: 109px; flex: none; display: flex; gap: 4px; padding: 3px 0 4px 2px; background: linear-gradient(#dbe7f6, #c7d9ee 70%, #d8eaff); border: 1px solid #8db2e3; border-right: 0; border-bottom-color: #b8f0ff; overflow: hidden; }
.rg { flex: none; border: 1px solid #a4c0e0; border-radius: 3px; display: flex; flex-direction: column; background: linear-gradient(#dfe9f5, #d2e0f0 20%, #c9daee 30%, #dce9f8); overflow: hidden; }
.rb { flex: 1; display: flex; min-height: 0; }
.rg footer { height: 19px; flex: none; background: #c1d8f1; color: #3e6aaa; text-align: center; line-height: 18px; position: relative; }
.lau { position: absolute; right: 5px; top: 4px; width: 7px; height: 7px; border: 1px solid #7a9cc8; border-right-width: 2px; border-bottom-width: 2px; }
.clip { width: 71px; } .font { width: 234px; } .algn { width: 111px; } .num { width: 87px; } .sty { width: 115px; } .cel { width: 66px; } .edt { width: 124px; }
.clip footer { padding-right: 16px; } .num footer, .algn footer { padding-right: 20px; }
.big { display: flex; flex-direction: column; align-items: center; line-height: 17px; }
.big span { display: flex; align-items: center; gap: 4px; white-space: nowrap; }
.clip .big { width: 48px; padding-top: 3px; gap: 4px; }
.clip .big svg { width: 28px; height: 32px; }
.col { display: flex; flex-direction: column; gap: 6px; padding-top: 4px; }
.col svg { width: 16px; height: 16px; }
.rows { flex-direction: column; padding: 10px 3px 0; gap: 12px; }
.row { display: flex; height: 21px; gap: 4px; }
.row.tall { height: 24px; gap: 2px; }
select { appearance: none; background: linear-gradient(45deg, transparent 50%, #5a7db5 50%) no-repeat right 7px center / 3px 3px, linear-gradient(-45deg, transparent 50%, #5a7db5 50%) no-repeat right 4px center / 3px 3px, #f0f5fc; border: 1px solid #b4cbe8; padding: 0 2px; color: #000; }
.fname { width: 130px; } .fsize { width: 46px; margin-right: 2px; font-size: 13px; }
.seg { display: flex; align-items: center; border: 1px solid #94b4dc; border-radius: 2px; background: linear-gradient(#dce8f6, #c8d9ee); color: #223; }
.seg button { flex: 1; display: flex; align-items: center; justify-content: center; align-self: stretch; min-width: 21px; }
.seg button + button { border-left: 1px solid #b4cbe8; }
.seg .dd { margin-right: 4px; }
.seg svg { width: 16px; height: 16px; }
.seg svg text { font: bold 8px "Liberation Sans", sans-serif; fill: #000; stroke: none; }
.ser { font: bold 15px "Liberation Serif", serif; }
.tall .seg { width: 45px; } .ser .ab { font-size: 18px; } .ser .am { font-size: 14px; } .ser sup { font-size: 8px; color: #36a; line-height: 8px; align-self: flex-start; }
.biu { width: 80px; } .it { font-style: italic; } .un { text-decoration: underline; }
.w34 { width: 34px; } .w67 { width: 67px; }
.w34 .wen { flex-direction: column; font-size: 9px; line-height: 8px; font-weight: bold; } .wen .zi { color: #36a; font-size: 11px; line-height: 10px; }
.rows3 { flex-direction: column; padding: 3px 2px 0; gap: 4px; }
.algn .row { gap: 3px; }
.s3 { width: 70px; }
.hot { background: linear-gradient(#fcd9a0, #f9b559 50%, #fee38a); border-color: #b8904c; }
.nf { height: 23px; } .full { width: 81px; } .comma { font: bold 18px/12px "Liberation Serif", serif; }
.dec { font: bold 8px/9px "Liberation Sans", sans-serif; }
.links { flex: 1; display: flex; flex-direction: column; align-items: flex-start; gap: 6px; padding: 3px 5px; }
.links button { height: 16px; display: flex; align-items: center; gap: 3px; line-height: 16px; white-space: nowrap; }
.links .dd { margin-left: 1px; }
.links svg { width: 16px; height: 16px; }
.cel .links { padding-right: 0; }
.links.sm { flex: none; width: 36px; padding: 3px 0 3px 6px; } .sig { color: #000; font-weight: bold; font-size: 16px; }
.edt .big { width: 42px; padding-top: 3px; } .edt .big svg { width: 30px; height: 32px; margin-bottom: 3px; }

.fbar { height: 19px; flex: none; display: flex; background: #fff; border: 1px solid #6f95c4; border-right: 0; color: #000; font-family: "Noto Sans CJK SC", sans-serif; }
.nb { width: 158px; display: flex; align-items: center; padding-right: 6px; }
.nb input { flex: 1; min-width: 0; text-align: center; font: 14px "Liberation Serif", serif; padding-right: 5px; }
.fx { width: 76px; background: linear-gradient(#e4eefa, #b8d0ee); border-radius: 9px 0 0 9px; border-right: 1px solid #6f95c4; display: flex; align-items: center; justify-content: space-between; padding: 0 6px; }
.fx b { width: 8px; height: 8px; border-radius: 50%; background: #b0c0d8; }
.fx em { font: italic bold 14px "Liberation Serif", serif; color: #445; }
.ft { padding-left: 12px; font-size: 15px; line-height: 17px; white-space: nowrap; }
s { text-decoration: none; font-family: "Liberation Mono", monospace; font-size: 12px; line-height: 0; }
.ft s { font-size: 13px; }
.sheet { flex: 1; min-height: 0; overflow: hidden; margin-top: 3px; border-top: 1px solid #6f95c4; background: #fff; }
table { table-layout: fixed; width: 996px; border-spacing: 0; color: #000; font: 13px/16px "Noto Sans CJK SC", sans-serif; }
.c0 { width: 34px; } .cA { width: 42px; } .cB { width: 72px; } .cC { width: 158px; } .cD { width: 186px; } .cE { width: 142px; } .cF { width: 157px; } .cG { width: 205px; }
thead th { height: 18px; padding: 0; font: 14px/16px "Liberation Serif", serif; color: #274458; background: linear-gradient(#f4f8fc, #d5deea); border-right: 1px solid #9eb6ce; border-bottom: 1px solid #9eb6ce; }
thead .s { background: linear-gradient(#f9d99f, #f1c15f); border-color: #f29536; }
thead .cor { background: #a9c4e9; }
tbody th { padding: 0; vertical-align: bottom; font: 13px/13px "Liberation Mono", monospace; color: #274458; background: #e4ecf7; border-right: 1px solid #9eb6ce; border-bottom: 1px solid #9eb6ce; }
tbody th.s { background: #ffd58d; border-color: #f29536; }
thead th.k { border-right-color: #000; } tbody th.k { border-bottom-color: #000; }
td { padding: 0 1px 0 3px; text-align: center; border-right: 1px solid #000; border-bottom: 1px solid #000; }
td.l { text-align: left; } td.nw { white-space: nowrap; overflow: visible; } td.nr { border-right: 0; } td.lt { border-right-color: #d0d7e5; }
.h26 { height: 26px; } .h37 { height: 37px; } .h38 { height: 38px; } .h57 { height: 57px; } .h51 { height: 51px; } .h66 { height: 66px; } .h104 { height: 104px; } .h62 { height: 62px; }
td.selc { outline: 2px solid #000; outline-offset: -1px; }
.g3 { display: grid; grid-template-columns: 100px 88px auto; grid-auto-rows: 16px; }
.g3 .v { padding-left: 19px; }
.mark { position: absolute; left: 1025px; right: 1px; top: 435px; height: 61px; border: 2px solid #2ad82a; box-shadow: 2px 3px 4px rgba(0,0,0,.45), inset 3px 3px 4px rgba(0,0,0,.3); }
.badge { position: absolute; left: 1414px; top: -28px; width: 46px; height: 46px; border-radius: 50%; background: #3cc050; border: 2px solid #e0f4e0; box-shadow: 0 2px 4px rgba(0,0,0,.5); color: #fff; font: bold 12px/14px "DejaVu Sans", sans-serif; text-align: center; padding-top: 26px; }

.taskbar { height: 18px; flex: none; overflow: hidden; display: flex; align-items: flex-start; gap: 2px; padding-top: 3px; background: #d4d0c8; border-top: 1px solid #fff; color: #000; }
.taskbar svg { width: 18px; height: 18px; }
.start, .tb { height: 22px; display: flex; align-items: center; gap: 2px; border: 1px solid; border-color: #fff #404040 #404040 #fff; box-shadow: inset -1px -1px #808080; white-space: nowrap; overflow: hidden; font: 12px "Roboto", "Noto Sans CJK SC", sans-serif; }
.start { width: 49px; flex: none; }
.start svg { width: 16px; }
.ql { width: 159px; flex: none; padding: 3px 8px 0 66px; display: flex; justify-content: space-between; background: linear-gradient(#808080, #808080) no-repeat 51px 0 / 1px 20px; }
.ql svg { width: 16px; }
.tb { flex: 0 1 116px; min-width: 0; padding-left: 4px; gap: 3px; }
.kb { margin-left: auto; padding: 2px 2px 0 8px; border-left: 1px solid #808080; }
.tray { width: 170px; flex: none; height: 22px; margin-right: 2px; border: 1px solid; border-color: #808080 #fff #fff #808080; display: flex; gap: 8px; align-items: center; padding: 0 6px; font-size: 13px; }
.tray .chev { width: 10px; }
time { margin: 0 26px 0 auto; font-family: Roboto, sans-serif; }
```
